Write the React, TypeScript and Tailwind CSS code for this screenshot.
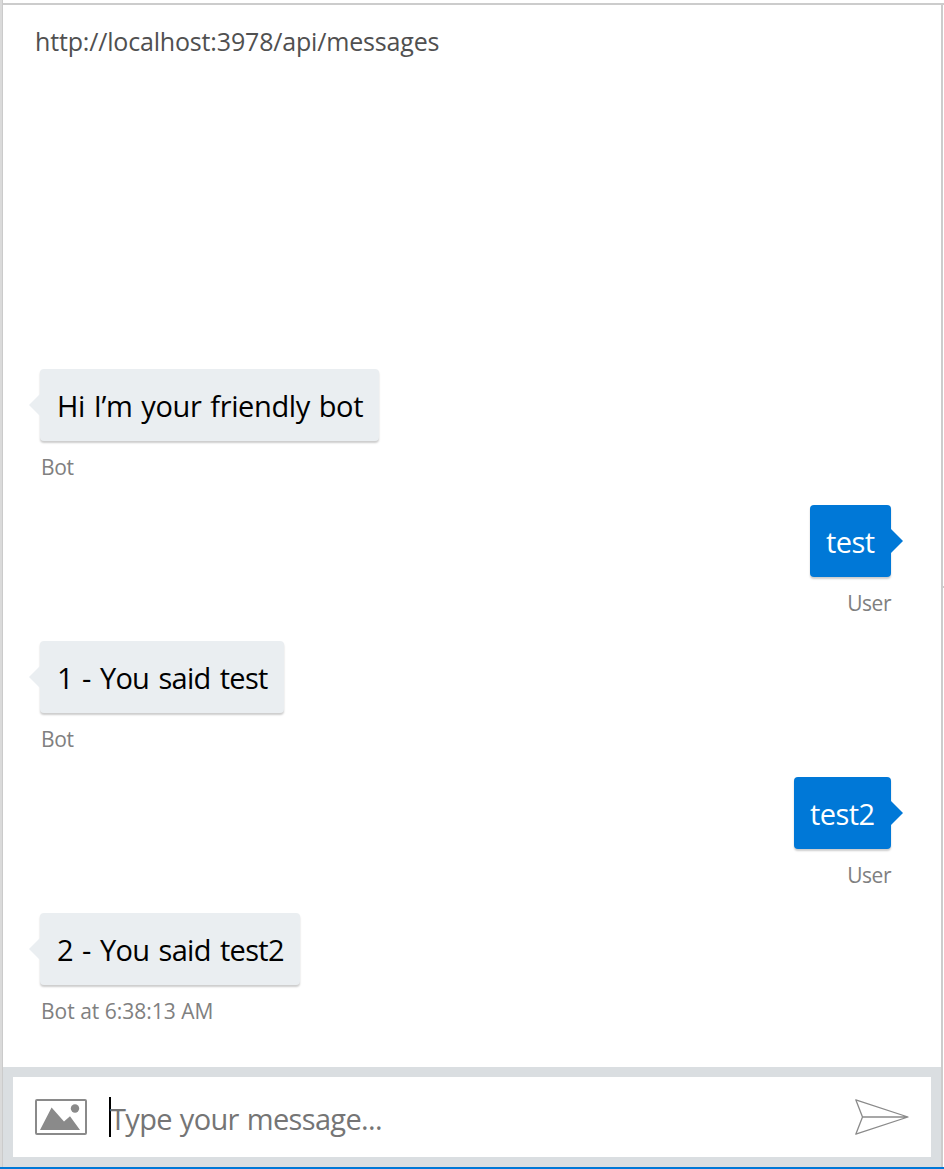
type Message = {
  id: number;
  from: 'bot' | 'user';
  text: string;
  caption: string;
  bubble: string;
  captionClass: string;
};

const messages: Message[] = [
  { id: 1, from: 'bot', text: 'Hi I’m your friendly bot', caption: 'Bot', bubble: 'w-[339px] tracking-[-0.38px] [word-spacing:1.7px]', captionClass: 'tracking-[-0.3px]' },
  { id: 2, from: 'user', text: 'test', caption: 'User', bubble: 'w-[81px] tracking-[-0.6px]', captionClass: 'tracking-[-0.5px]' },
  { id: 3, from: 'bot', text: '1 - You said test', caption: 'Bot', bubble: 'w-[244px] tracking-[-0.72px] [word-spacing:2.4px]', captionClass: 'tracking-[-0.3px]' },
  { id: 4, from: 'user', text: 'test2', caption: 'User', bubble: 'w-[97px] tracking-[-0.6px]', captionClass: 'tracking-[-0.5px]' },
  { id: 5, from: 'bot', text: '2 - You said test2', caption: 'Bot at 6:38:13 AM', bubble: 'w-[260px] tracking-[-0.7px] [word-spacing:2.4px]', captionClass: 'tracking-[0px]' },
];

function Bubble({ message }: { message: Message }) {
  const bot = message.from === 'bot';
  return (
    <li className={`flex h-[136px] flex-col ${bot ? 'items-start' : 'items-end'}`}>
      <div
        className={`relative flex h-[72px] shrink-0 items-center whitespace-nowrap rounded-[4px] pt-[2px] text-[29px] leading-10 shadow-[0_2px_2px_rgba(0,0,0,0.2)] ${message.bubble} ${
          bot ? 'bg-[#eaeef1] pl-[17px] text-black' : 'bg-[#0078d7] pl-4 text-white'
        }`}
      >
        <svg
          className={`absolute top-6 h-6 w-3 ${bot ? '-left-[11px] text-[#eaeef1]' : '-right-3 text-[#0078d7]'}`}
          viewBox="0 0 12 24"
          fill="currentColor"
        >
          <path d={bot ? 'M12 0 0 12l12 12z' : 'M0 0l12 12L0 24z'} />
        </svg>
        <span>{message.text}</span>
      </div>
      <div className={`mt-[11px] whitespace-nowrap text-[21px] leading-[30px] text-[#808080] ${bot ? 'pl-px' : ''} ${message.captionClass}`}>
        {message.caption}
      </div>
    </li>
  );
}

export default function App() {
  return (
    <div className="flex h-[1169px] w-[944px] flex-col overflow-hidden border-b-2 border-[#0078d7] bg-white font-['Open_Sans','Noto_Sans',sans-serif]">
      <div className="flex min-h-0 flex-1">
        <div className="w-[3px] shrink-0 border-r border-[#cbcbcb] bg-[#dadada]" />
        <div className="flex min-w-0 flex-1 flex-col">
          <div className="mt-[3px] h-[2px] shrink-0 bg-[#cccccc]" />
          <div className="flex min-h-0 flex-1">
            <main className="flex w-[938px] shrink-0 flex-col">
              <header className="h-[364px] shrink-0 pl-8 pt-[18px] text-[25px] leading-9 tracking-[-0.17px] text-[#505050]">
                <span>http://localhost:3978/api/messages</span>
              </header>
              <ul className="flex-1 pl-[37px] pr-[50px]">
                {messages.map((m) => (
                  <Bubble key={m.id} message={m} />
                ))}
              </ul>
              <footer className="h-[100px] shrink-0 bg-[#dadee1] p-[10px]">
                <div className="flex h-20 items-center bg-white pl-[22px] pr-[22px]">
                  <svg className="h-9 w-[52px] shrink-0" viewBox="0 0 52 36" fill="none">
                    <rect x="1" y="1" width="50" height="34" rx="1" stroke="#8a8a8a" strokeWidth="2" />
                    <path d="M5 31 16.6 8.6 29 22.4l6-5.2L45 31z" fill="#8a8a8a" />
                    <circle cx="40" cy="9.5" r="4.2" fill="#8a8a8a" />
                  </svg>
                  <div className="ml-[22px] h-10 w-[2px] shrink-0 bg-black" />
                  <span className="-ml-px flex-1 whitespace-nowrap pt-[3px] text-[29px] leading-10 tracking-[-0.65px] text-[#757575] [word-spacing:1px]">
                    <span>Type your message...</span>
                  </span>
                  <svg className="h-9 w-[54px] shrink-0" viewBox="0 0 54 36" fill="none" stroke="#8a8a8a" strokeWidth="1.3" strokeLinejoin="round">
                    <path d="M.8.8 53 18 .8 35.2 7.5 18zM7.5 18H53" />
                  </svg>
                </div>
              </footer>
            </main>
            <div className="w-[2px] shrink-0 bg-[#cccccc]" />
            <div className="flex-1 pt-[581px]">
              <div className="h-[2px] bg-[#cccccc]" />
            </div>
          </div>
        </div>
      </div>
    </div>
  );
}
